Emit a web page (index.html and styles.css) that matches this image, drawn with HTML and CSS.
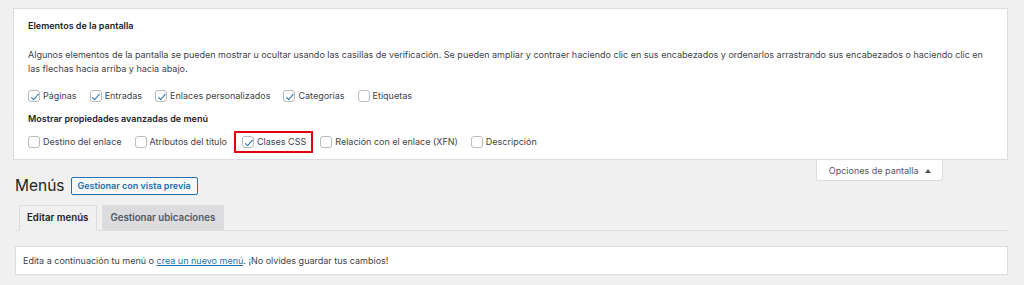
FILE: index.html
```html
<!DOCTYPE html>
<html lang="es">
<head>
    <meta charset="UTF-8">
    <meta name="viewport" content="width=device-width, initial-scale=1.0">
    <title>Menús</title>
    <link rel="stylesheet" href="styles.css">
</head>
<body>
    <div class="screen-meta">
        <div class="prefs-group">
            <div class="legend">Elementos de la pantalla</div>
            <p class="intro">Algunos elementos de la pantalla se pueden mostrar u ocultar usando las casillas de verificación. Se pueden ampliar y contraer haciendo clic en sus encabezados y ordenarlos arrastrando sus encabezados o haciendo clic en las flechas hacia arriba y hacia abajo.</p>
            <div class="checks">
                <label class="check"><span class="box on"></span>Páginas</label>
                <label class="check"><span class="box on"></span>Entradas</label>
                <label class="check"><span class="box on"></span>Enlaces personalizados</label>
                <label class="check"><span class="box on"></span>Categorías</label>
                <label class="check"><span class="box"></span>Etiquetas</label>
            </div>
        </div>
        <div class="prefs-group">
            <div class="legend sub">Mostrar propiedades avanzadas de menú</div>
            <div class="checks">
                <label class="check"><span class="box"></span>Destino del enlace</label>
                <label class="check"><span class="box"></span>Atributos del título</label>
                <span class="highlight"><label class="check"><span class="box on"></span>Clases CSS</label></span>
                <label class="check"><span class="box"></span>Relación con el enlace (XFN)</label>
                <label class="check"><span class="box"></span>Descripción</label>
            </div>
        </div>
    </div>

    <div class="screen-links">
        <button class="screen-toggle">Opciones de pantalla <span class="arrow"></span></button>
    </div>

    <div class="wrap">
        <div class="title-row">
            <h1>Menús</h1>
            <a class="page-action" href="#">Gestionar con vista previa</a>
        </div>
        <nav class="tabs">
            <a class="tab active" href="#">Editar menús</a>
            <a class="tab" href="#">Gestionar ubicaciones</a>
        </nav>
        <div class="notice">
            Edita a continuación tu menú o <a href="#">crea un nuevo menú</a>. ¡No olvides guardar tus cambios!
        </div>
    </div>
</body>
</html>
```

FILE: styles.css
```css
body {
    margin: 0;
    padding: 8px 16px 0 13px;
    background: #f0f0f1;
    color: #3c434a;
    font-family: Inter, "Noto Sans", sans-serif;
    font-size: 9px;
}

.screen-meta {
    background: #fff;
    border: 1px solid #dcdcde;
    padding: 10px 14px 9px 14px;
}

.legend {
    font-weight: 600;
    color: #1d2327;
    line-height: 14px;
}

.intro {
    margin: 15px 0 12px;
    line-height: 14px;
}

.checks {
    display: flex;
    align-items: center;
    height: 16px;
}

.legend.sub {
    margin: 8px 0 8px;
}

.check {
    display: inline-flex;
    align-items: center;
    margin-right: 13px;
    line-height: 16px;
}

.box {
    box-sizing: border-box;
    width: 12px;
    height: 12px;
    border: 1px solid #b8bcc0;
    border-radius: 3px;
    margin-right: 3px;
    background: #fff;
    position: relative;
}

.box.on::after {
    content: "";
    position: absolute;
    left: 3.5px;
    top: 0.5px;
    width: 3px;
    height: 6.5px;
    border: solid #2271b1;
    border-width: 0 1.9px 1.9px 0;
    transform: rotate(40deg);
}

.highlight {
    display: inline-flex;
    border: 2px solid #e3000f;
    padding: 1px 5px 1px 6px;
    margin: 0 7px 0 -6px;
}

.highlight .check {
    margin-right: 0;
}

.screen-links {
    float: right;
    margin-right: 65px;
}

.screen-toggle {
    background: #fff;
    border: 1px solid #dcdcde;
    border-top: none;
    border-radius: 0 0 3px 3px;
    height: 21px;
    padding: 0 11px 0 12px;
    font-family: inherit;
    font-size: 9px;
    color: #50575e;
}

.arrow {
    display: inline-block;
    width: 0;
    height: 0;
    margin-left: 4px;
    border-left: 3px solid transparent;
    border-right: 3px solid transparent;
    border-bottom: 4px solid #50575e;
    vertical-align: 1px;
}

.wrap {
    margin-left: 2px;
}

.title-row {
    display: flex;
    align-items: center;
    padding-top: 16px;
}

h1 {
    margin: 0 6px 0 0;
    font-size: 15.5px;
    font-weight: 400;
    color: #1d2327;
}

.page-action {
    border: 1px solid #2271b1;
    border-radius: 2px;
    background: #f6f7f7;
    color: #2271b1;
    font-weight: 600;
    text-decoration: none;
    padding: 0 6px;
    line-height: 16px;
}

.tabs {
    display: flex;
    gap: 5px;
    margin-top: 10px;
    padding-left: 4px;
    border-bottom: 1px solid #dcdcde;
}

.tab {
    padding: 0 8px 0 7px;
    line-height: 24px;
    border: 1px solid #dcdcde;
    border-bottom: none;
    background: #dcdcde;
    color: #50575e;
    font-size: 9.7px;
    font-weight: 600;
    text-decoration: none;
}

.tab.active {
    background: #f0f0f1;
    color: #1d2327;
    margin-bottom: -1px;
    border-bottom: 1px solid #f0f0f1;
}

.notice {
    margin-top: 15px;
    background: #fff;
    border: 1px solid #dcdcde;
    padding: 0 7px;
    line-height: 27px;
}

.notice a {
    color: #2271b1;
}
```
